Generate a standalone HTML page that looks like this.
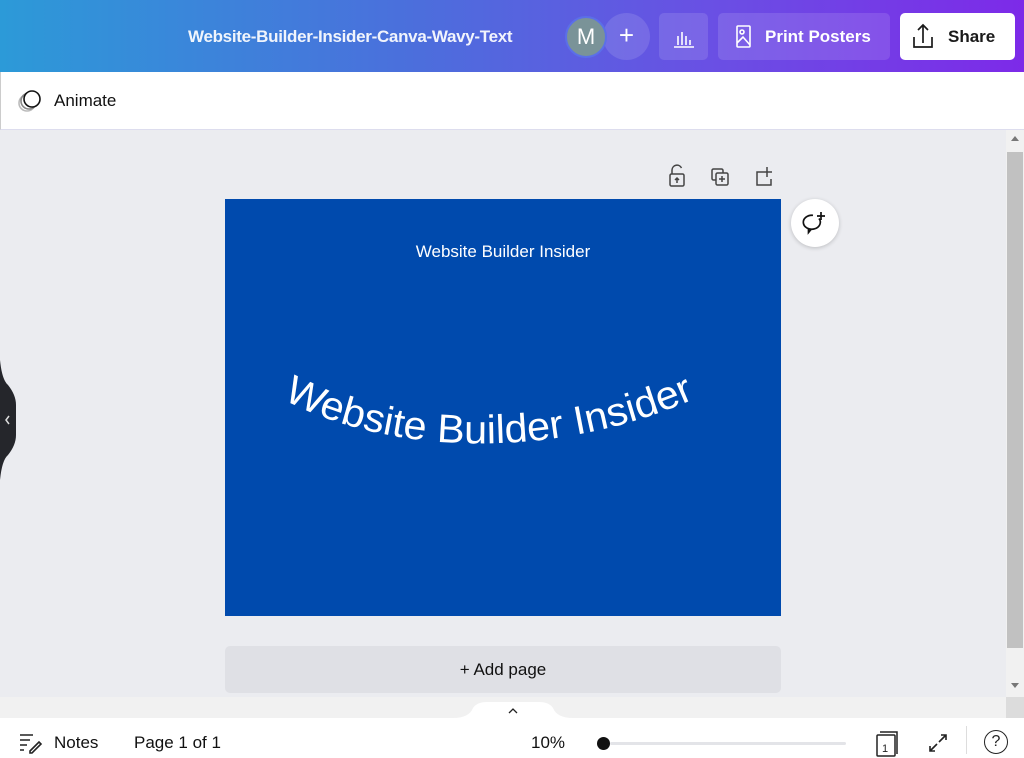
<!DOCTYPE html>
<html><head><meta charset="utf-8"><style>
*{box-sizing:border-box;margin:0;padding:0}
body{width:1024px;height:758px;overflow:hidden;position:relative;font-family:"Liberation Sans",sans-serif;background:#ebecf0}
.hdr{position:absolute;left:0;top:0;width:1024px;height:72px;background:linear-gradient(90deg,#2c9ad8 0%,#4b6fdc 40%,#6a4fe4 70%,#7d2ae8 100%)}
.title{position:absolute;left:188px;top:27px;color:#fff;font-size:17px;font-weight:bold;letter-spacing:-0.3px;opacity:.92}
.av{position:absolute;left:565px;top:16px;width:42px;height:42px;border-radius:50%;background:#7a9398;border:2px solid #5b6fe8;color:#fff;font-size:22px;text-align:center;line-height:38px}
.plus{position:absolute;left:603px;top:13px;width:47px;height:47px;border-radius:50%;background:rgba(255,255,255,.12);color:#fff;font-size:26px;text-align:center;line-height:44px}
.btn{position:absolute;top:13px;height:47px;border-radius:5px;background:rgba(255,255,255,.12);color:#fff;font-weight:bold;font-size:17px}
.share{position:absolute;left:900px;top:13px;width:115px;height:47px;border-radius:5px;background:#fff;color:#1a1a1a;font-weight:bold;font-size:17px}
.bar2{position:absolute;left:0;top:72px;width:1024px;height:58px;background:#fff;border-left:1px solid #ccc;border-bottom:1px solid #dde}
.page{position:absolute;left:225px;top:199px;width:556px;height:417px;background:#004aad}
.add{position:absolute;left:225px;top:646px;width:556px;height:47px;border-radius:5px;background:#dfe0e5;color:#111;font-size:17px;text-align:center;line-height:47px}
.bottom{position:absolute;left:0;top:718px;width:1024px;height:40px;background:#fff}
.t{position:absolute;color:#111;font-size:17px}
</style></head><body>
<div class="hdr">
<div class="title">Website-Builder-Insider-Canva-Wavy-Text</div>
<div class="plus">+</div>
<div class="av">M</div>
<div class="btn" style="left:659px;width:49px"><svg width="49" height="47"><g stroke="#fff" stroke-width="1.6" fill="none"><path d="M15 34h20M19 32v-9M23 32v-13M27 32v-9M31 32v-5"/></g></svg></div>
<div class="btn" style="left:718px;width:172px"><svg width="30" height="47" style="position:absolute;left:10px;top:0"><g stroke="#fff" stroke-width="1.6" fill="none"><rect x="9" y="13" width="13" height="21" rx="1"/><circle cx="14" cy="19" r="2"/><path d="M9 30l6-6 7 8"/></g></svg><span style="position:absolute;left:47px;top:14px">Print Posters</span></div>
</div>
<div class="share"><svg width="30" height="47" style="position:absolute;left:8px"><g stroke="#1a1a1a" stroke-width="1.7" fill="none"><path d="M6 24v10h18V24M15 30V12M10 17l5-5 5 5"/></g></svg><span style="position:absolute;left:48px;top:14px">Share</span></div>
<div class="bar2">
<svg width="30" height="30" style="position:absolute;left:15px;top:16px"><g fill="none" stroke-width="1.6"><circle cx="11" cy="15" r="8" stroke="#bbb"/><circle cx="13" cy="13" r="8" stroke="#888"/><circle cx="16" cy="11" r="8" stroke="#111" fill="#fff"/></g></svg>
<span class="t" style="left:53px;top:19px">Animate</span>
</div>
<svg width="20" height="120" style="position:absolute;left:0;top:360px"><path d="M0 0 Q2 20 8 25 Q16 35 16 45 V75 Q16 85 8 95 Q2 100 0 120Z" fill="#25262b"/><path d="M9 56l-3 4 3 4" stroke="#ddd" stroke-width="1.5" fill="none"/></svg>
<div style="position:absolute;left:1006px;top:130px;width:18px;height:568px;background:#f1f1f1"></div>
<div style="position:absolute;left:1007px;top:152px;width:16px;height:496px;background:#c1c1c1"></div>
<div style="position:absolute;left:1011px;top:136px;border:4px solid transparent;border-bottom:5px solid #777;border-top:0"></div>
<div style="position:absolute;left:1011px;top:683px;border:4px solid transparent;border-top:5px solid #777;border-bottom:0"></div>
<div style="position:absolute;left:0;top:697px;width:1006px;height:21px;background:#f1f1f1"></div>
<div style="position:absolute;left:1006px;top:697px;width:18px;height:21px;background:#dcdcdc"></div>
<svg width="120" height="22" style="position:absolute;left:453px;top:700px"><path d="M0 18 Q16 18 20 8 Q24 2 34 2 H86 Q96 2 100 8 Q104 18 120 18Z" fill="#fff"/><path d="M56 13l4-4 4 4" stroke="#222" stroke-width="1.3" fill="none"/></svg>
<svg width="130" height="30" style="position:absolute;left:660px;top:163px"><g stroke="#444" stroke-width="1.5" fill="none"><rect x="10" y="11" width="14" height="12" rx="1.5"/><path d="M12 11V7a5 5 0 0 1 9.5-2"/><path d="M17 20v-5M15 17l2-2 2 2"/><rect x="52" y="6" width="11" height="11" rx="1.5"/><rect x="56" y="10" width="12" height="12" rx="1.5" fill="#ebecf0"/><path d="M62 13v6M59 16h6"/><path d="M103 9h-6v13h14v-6M107 4v10M102 9h10"/></g></svg>
<div style="position:absolute;left:791px;top:199px;width:48px;height:48px;border-radius:50%;background:#fff;box-shadow:0 1px 4px rgba(0,0,0,.2)"><svg width="48" height="48"><g stroke="#111" stroke-width="1.7" fill="none"><path d="M28 19.5A8.5 7 0 1 1 22 16.3"/><path d="M20 30.5l-2.5 3v-4.5"/><path d="M30 13v8M26 17h8"/></g></svg></div>
<div class="page"><svg width="556" height="417">
<text x="278" y="58" text-anchor="middle" fill="#fff" font-size="17" font-family="Liberation Sans, sans-serif">Website Builder Insider</text>
<path id="w" d="M58 200 C 160 255, 330 265, 480 195" fill="none"/>
<text fill="#fff" font-size="40" font-family="Liberation Sans, sans-serif"><textPath href="#w" textLength="425" lengthAdjust="spacingAndGlyphs">Website Builder Insider</textPath></text>
</svg></div>
<div class="add">+ Add page</div>
<div class="bottom">
<svg width="26" height="26" style="position:absolute;left:18px;top:12px"><g stroke="#222" stroke-width="1.6" fill="none"><path d="M2 5h13M2 10h10M2 15h7M2 20h4M12 21l9-9 2 2-9 9h-2z"/></g></svg>
<span class="t" style="left:54px;top:15px">Notes</span>
<span class="t" style="left:134px;top:15px">Page 1 of 1</span>
<span class="t" style="left:531px;top:15px">10%</span>
<div style="position:absolute;left:597px;top:19px;width:13px;height:13px;border-radius:50%;background:#111"></div>
<div style="position:absolute;left:610px;top:24px;width:236px;height:3px;background:#e3e4e8;border-radius:2px"></div>
<svg width="32" height="30" style="position:absolute;left:872px;top:10px"><g stroke="#222" stroke-width="1.5" fill="none"><rect x="5" y="7" width="18" height="21" rx="1"/><path d="M8 4h17v22"/></g><text x="10" y="24" font-size="11" fill="#222" font-family="Liberation Sans">1</text></svg>
<svg width="26" height="26" style="position:absolute;left:925px;top:12px"><g stroke="#222" stroke-width="1.6" fill="none"><path d="M14 12l7-7M16 5h5v5M12 14l-7 7M5 16v5h5"/></g></svg>
<div style="position:absolute;left:966px;top:8px;width:1px;height:28px;background:#ddd"></div>
<div style="position:absolute;left:984px;top:12px;width:24px;height:24px;border:1.7px solid #222;border-radius:50%;text-align:center;font-size:16px;line-height:21px;color:#222">?</div>
</div>
</body></html>
